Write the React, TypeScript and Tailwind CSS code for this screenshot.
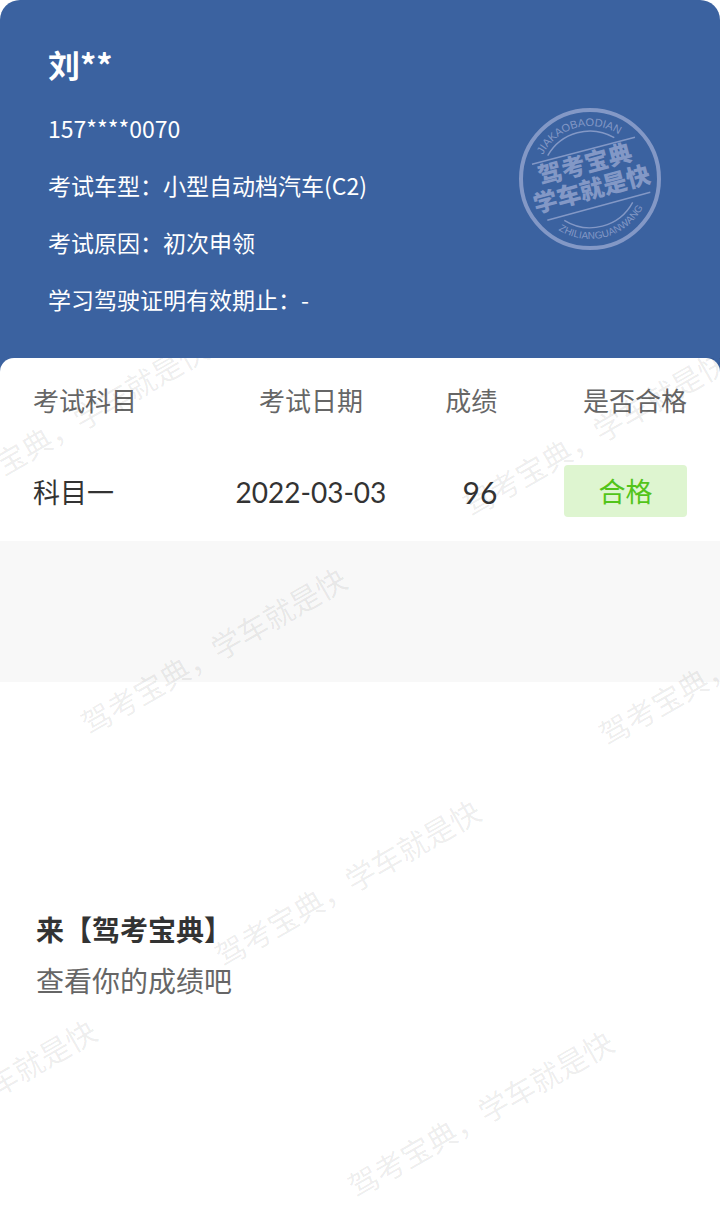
const details = [
  { label: '考试车型', value: '小型自动档汽车(C2)' },
  { label: '考试原因', value: '初次申领' },
  { label: '学习驾驶证明有效期止', value: '-' },
]

const results = [{ subject: '科目一', date: '2022-03-03', score: 96, status: '合格' }]

const watermarks = [
  'left-[75px] top-[62px]',
  'left-[595px] top-[74px]',
  'left-[213px] top-[292px]',
  'left-[731px] top-[303px]',
  'left-[347px] top-[524px]',
  'left-[-37px] top-[744px]',
  'left-[480px] top-[755px]',
]

function Stamp() {
  return (
    <svg
      viewBox="-71 -71 142 142"
      className="w-[142px] h-[142px] mb-2 shrink-0 text-[#8398c6]"
      fill="none"
      stroke="currentColor"
    >
      <defs>
        <path id="stamp-top" d="M-53 0A53 53 0 0 1 53 0" />
        <path id="stamp-bottom" d="M-60 0A60 60 0 0 0 60 0" />
      </defs>
      <circle r="69" strokeWidth="4" />
      <path d="M-42.3 -23.3A48.5 48.5 0 0 1 24.3 -41.3M-25.7 41.3A48.5 48.5 0 0 0 42.7 23.3" strokeWidth="1.4" />
      <path d="M-58 -14.7L45 -41.7M-42.7 41.3L60.3 13.3" strokeWidth="1.4" />
      <g transform="rotate(-15)" fill="currentColor" stroke="none" textAnchor="middle">
        <g className="font-['Liberation_Sans',sans-serif]">
          <text className="text-[11px]">
            <textPath href="#stamp-top" startOffset="50%">JIAKAOBAODIAN</textPath>
          </text>
          <text className="text-[10px]">
            <textPath href="#stamp-bottom" startOffset="50%">ZHILIANGUANWANG</textPath>
          </text>
        </g>
        <g className="text-[24px] font-black">
          <text x="-1" y="-7">驾考宝典</text>
          <text x="-1" y="19">学车就是快</text>
        </g>
      </g>
    </svg>
  )
}

function Watermark() {
  return (
    <div aria-hidden="true" className="absolute inset-0 overflow-hidden pointer-events-none select-none">
      {watermarks.map((position) => (
        <span
          key={position}
          className={`absolute -translate-x-1/2 -translate-y-1/2 -rotate-30 whitespace-nowrap text-[30px] leading-none text-black/8 ${position}`}
        >
          驾考宝典，学车就是快
        </span>
      ))}
    </div>
  )
}

export default function App() {
  return (
    <div className="min-h-screen flex flex-col bg-white font-['Noto_Sans_CJK_SC',sans-serif] text-[#333]">
      {/* Candidate */}
      <header className="flex items-center justify-between rounded-t-[20px] bg-[#3b62a0] pl-12 pr-[59px] pt-[38px] pb-14 text-white">
        <div>
          <h1 className="mb-2.5 text-[32px] leading-[52px] font-bold">刘**</h1>
          <div className="text-[23px] leading-[57px]">
            <p>157****0070</p>
            {details.map((item) => (
              <p key={item.label}>
                {item.label}：{item.value}
              </p>
            ))}
          </div>
        </div>
        <Stamp />
      </header>

      <main className="relative -mt-[26px] flex-1 rounded-t-[14px] bg-white">
        {/* Results */}
        <section className="px-[33px] pb-6">
          <table className="w-full table-fixed">
            <colgroup>
              <col className="w-[27%]" />
              <col className="w-[31%]" />
              <col className="w-[13%]" />
              <col className="w-[29%]" />
            </colgroup>
            <thead className="text-[26px] text-[#666]">
              <tr className="h-[83px]">
                <th className="text-left font-normal">考试科目</th>
                <th className="text-center font-normal">考试日期</th>
                <th className="text-right font-normal">成绩</th>
                <th className="text-right font-normal">是否合格</th>
              </tr>
            </thead>
            <tbody>
              {results.map((row) => (
                <tr key={row.subject} className="h-[76px] align-bottom">
                  <td className="text-[27px] leading-[50px]">{row.subject}</td>
                  <td className="text-center font-['Lato',sans-serif] text-[28px] leading-[50px]">{row.date}</td>
                  <td className="text-right font-['Lato',sans-serif] text-[30px] leading-[50px]">{row.score}</td>
                  <td>
                    <span className="relative z-10 ml-auto block w-[123px] rounded bg-[#def5d0] text-center text-[27px] leading-[52px] text-[#52c41a]">
                      {row.status}
                    </span>
                  </td>
                </tr>
              ))}
            </tbody>
          </table>
        </section>

        <div className="h-[141px] bg-[#f8f8f8]" />

        {/* Promo */}
        <section className="px-9 pt-[222px] pb-16 text-[28px] leading-[51px]">
          <h2 className="font-bold">来【驾考宝典】</h2>
          <p className="text-[#666]">查看你的成绩吧</p>
        </section>

        <Watermark />
      </main>
    </div>
  )
}
